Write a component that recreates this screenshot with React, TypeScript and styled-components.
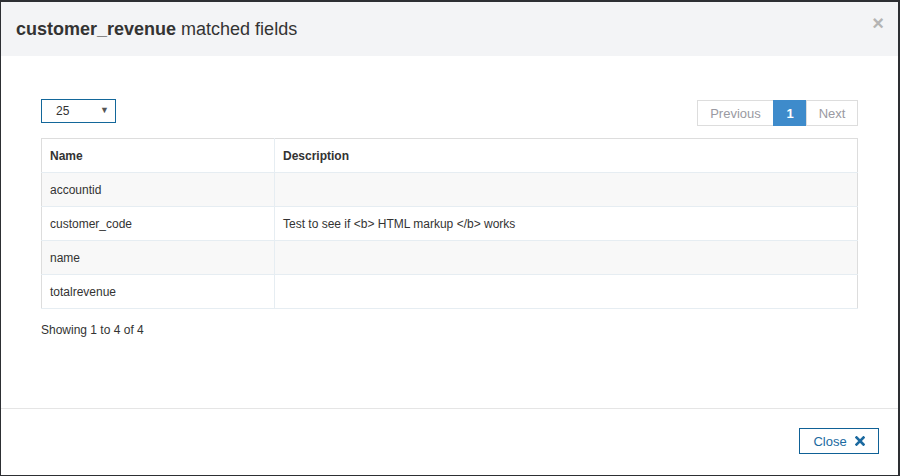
import React from "react";
import styled, { createGlobalStyle } from "styled-components";

const Global = createGlobalStyle`
  html, body { margin: 0; padding: 0; background: #2d2f33; }
  body { font-family: "Liberation Sans", Arial, sans-serif; color: #333; }
  * { box-sizing: border-box; }
`;

const Backdrop = styled.div`
  width: 900px;
  height: 476px;
  padding: 2px 2px 1px 1px;
  display: flex;
`;

const Modal = styled.div`
  flex: 1;
  background: #fff;
  display: flex;
  flex-direction: column;
`;

const Header = styled.div`
  height: 54px;
  background: #f3f4f6;
  display: flex;
  align-items: center;
  justify-content: space-between;
  padding: 0 14px 0 15px;
`;

const Title = styled.h4`
  margin: 0;
  font-size: 18px;
  font-weight: normal;
  color: #333;
  b { font-weight: bold; }
`;

const XClose = styled.span`
  font-size: 20px;
  font-weight: bold;
  color: #b4b4b4;
  line-height: 1;
  margin-top: -12px;
`;

const Body = styled.div`
  flex: 1;
  padding: 43px 40px 0 40px;
`;

const TopBar = styled.div`
  display: flex;
  justify-content: space-between;
  align-items: flex-start;
  height: 39px;
`;

const Select = styled.div`
  width: 75px;
  height: 24px;
  border: 1px solid #13679a;
  display: flex;
  align-items: center;
  justify-content: space-between;
  padding: 0 6px 0 14px;
  font-size: 12px;
  color: #333;
`;

const Caret = styled.span`
  font-size: 9px;
  color: #555;
  margin-top: -3px;
`;

const Pager = styled.div`
  display: flex;
  margin-top: 1px;
`;

const PageBtn = styled.div<{ $active?: boolean; $w: number }>`
  width: ${(p) => p.$w}px;
  height: 26px;
  display: flex;
  align-items: center;
  justify-content: center;
  font-size: 13px;
  border: 1px solid ${(p) => (p.$active ? "#3e8bcb" : "#ddd")};
  margin-left: -1px;
  background: ${(p) => (p.$active ? "#3e8bcb" : "#fff")};
  color: ${(p) => (p.$active ? "#fff" : "#9a9aa2")};
  font-weight: ${(p) => (p.$active ? "bold" : "normal")};
  &:first-child { margin-left: 0; }
`;

const Table = styled.table`
  width: 100%;
  border-collapse: collapse;
  border: 1px solid #dddddd;
  font-size: 12px;
`;

const Th = styled.th`
  text-align: left;
  font-weight: bold;
  height: 34px;
  padding: 0 8px;
  border-bottom: 1px solid #e6edf2;
  border-left: 1px solid #e6edf2;
  &:first-child { border-left: none; width: 233px; }
`;

const Tr = styled.tr<{ $odd: boolean }>`
  background: ${(p) => (p.$odd ? "#f8f8f8" : "#fff")};
`;

const Td = styled.td`
  height: 34px;
  padding: 0 8px;
  border-bottom: 1px solid #e6edf2;
  border-left: 1px solid #e6edf2;
  &:first-child { border-left: none; }
`;

const Info = styled.div`
  margin-top: 14px;
  font-size: 12px;
  color: #333;
`;

const Footer = styled.div`
  border-top: 1px solid #e5e5e5;
  height: 67px;
  display: flex;
  justify-content: flex-end;
  align-items: flex-start;
  padding: 19px 19px 0 0;
`;

const CloseBtn = styled.div`
  width: 80px;
  height: 26px;
  border: 1px solid #0f6196;
  display: flex;
  align-items: center;
  justify-content: center;
  gap: 8px;
  color: #1c6aa0;
  font-size: 13px;
`;

const rows: [string, string][] = [
  ["accountid", ""],
  ["customer_code", "Test to see if <b> HTML markup </b> works"],
  ["name", ""],
  ["totalrevenue", ""],
];

export default function App() {
  return (
    <>
      <Global />
      <Backdrop>
        <Modal>
          <Header>
            <Title>
              <b>customer_revenue</b> matched fields
            </Title>
            <XClose>×</XClose>
          </Header>
          <Body>
            <TopBar>
              <Select>
                <span>25</span>
                <Caret>▼</Caret>
              </Select>
              <Pager>
                <PageBtn $w={77}>Previous</PageBtn>
                <PageBtn $w={34} $active>1</PageBtn>
                <PageBtn $w={52}>Next</PageBtn>
              </Pager>
            </TopBar>
            <Table>
              <thead>
                <tr>
                  <Th>Name</Th>
                  <Th>Description</Th>
                </tr>
              </thead>
              <tbody>
                {rows.map(([n, d], i) => (
                  <Tr key={n} $odd={i % 2 === 0}>
                    <Td>{n}</Td>
                    <Td>{d}</Td>
                  </Tr>
                ))}
              </tbody>
            </Table>
            <Info>Showing 1 to 4 of 4</Info>
          </Body>
          <Footer>
            <CloseBtn>
              <span>Close</span>
              <svg width="10" height="10" viewBox="0 0 10 10">
                <path d="M1.5 1.5 L8.5 8.5 M8.5 1.5 L1.5 8.5" stroke="#1c6aa0" strokeWidth="2.6" strokeLinecap="square" />
              </svg>
            </CloseBtn>
          </Footer>
        </Modal>
      </Backdrop>
    </>
  );
}
